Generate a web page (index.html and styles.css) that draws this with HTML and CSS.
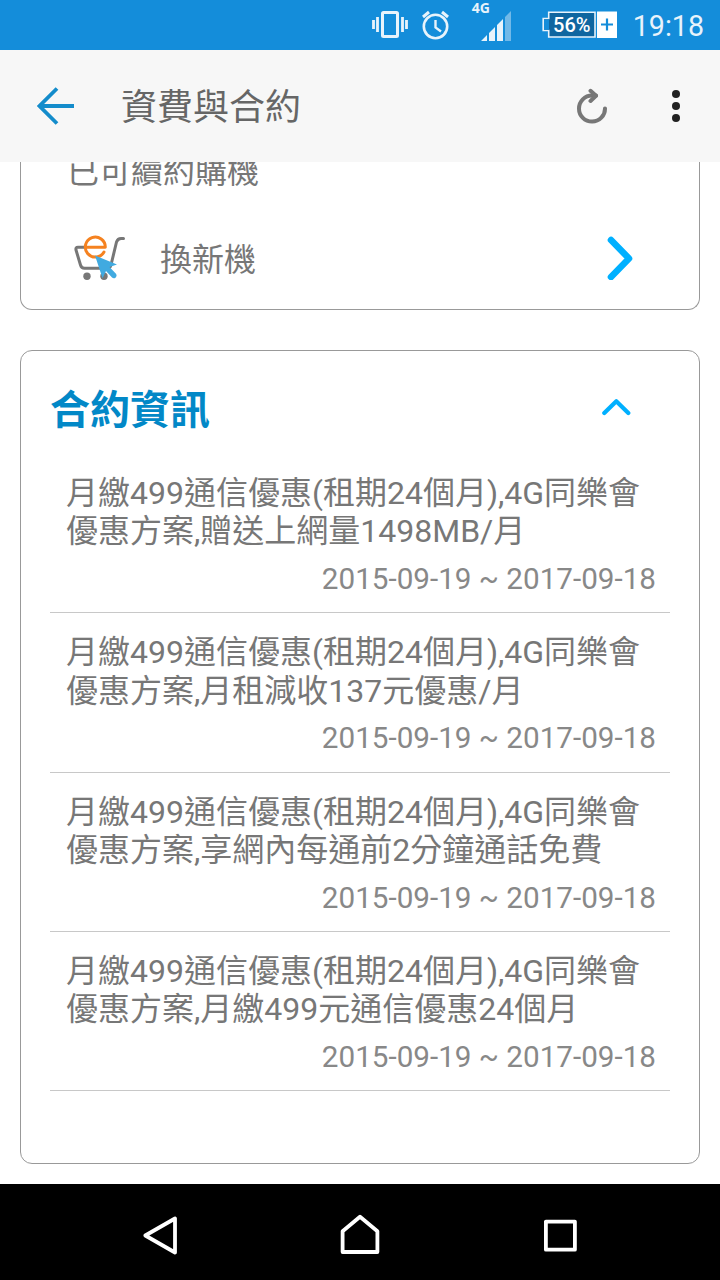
FILE: index.html
```html
<!DOCTYPE html>
<html lang="zh-Hant">
<head>
    <meta charset="UTF-8">
    <meta name="viewport" content="width=device-width, initial-scale=1.0">
    <title>資費與合約</title>
    <link rel="stylesheet" href="styles.css">
</head>
<body>
    <div class="status-bar">
        <svg class="vibrate" width="36" height="28" viewBox="0 0 36 28">
            <rect x="10.5" y="1.5" width="15" height="24" rx="1" fill="none" stroke="#e8f3fb" stroke-width="3"/>
            <path d="M1.5 9v9M5.5 6v15M30.5 6v15M34.5 9v9" stroke="#e8f3fb" stroke-width="2.8"/>
        </svg>
        <svg class="alarm" width="30" height="30" viewBox="0 0 30 30" fill="none" stroke="#e8f3fb">
            <circle cx="14.5" cy="16.5" r="11.7" stroke-width="2.6"/>
            <path d="M14.5 10v7.5l5.5 4" stroke-width="2.4"/>
            <path d="M2 7l6-5M27 7l-6-5" stroke-width="3"/>
        </svg>
        <div class="network">
            <span class="network-type">4G</span>
            <svg width="32" height="31" viewBox="0 0 32 31">
                <path d="M1 31L7 25V31zM9 31V23L15 17V31zM17 31V15L23 9V31z" fill="#e8f3fb"/>
                <path d="M25 31V7L31 1V31z" fill="#72b9e8"/>
            </svg>
        </div>
        <div class="battery">
            <svg width="75" height="28" viewBox="0 0 75 28">
                <path d="M6.7 1.2H53V26H6.7V19.5H1.2V7.5H6.7z" fill="#0f66a0" stroke="#e8f3fb" stroke-width="1.6"/>
                <path d="M2 8.4H7V18.7H2z" fill="#148dda"/>
                <path d="M55 .5H75V27H55z" fill="#fff"/>
                <path d="M59 13.5H71M65 7.5V19.5" stroke="#148dda" stroke-width="2.2"/>
            </svg>
            <span class="battery-level">56%</span>
        </div>
        <span class="clock">19:18</span>
    </div>

    <header class="toolbar">
        <svg class="back" width="38" height="38" viewBox="0 0 38 38" fill="none" stroke="#148ccb" stroke-width="3.8">
            <path d="M37 19H3M20 1.5L2.5 19L20 36.5"/>
        </svg>
        <h1>資費與合約</h1>
        <svg class="refresh" width="32" height="36" viewBox="0 0 32 36" fill="none" stroke="#777" stroke-width="4" stroke-linecap="round" stroke-linejoin="round">
            <path d="M28 20.4A13 13 0 1 1 15 7.6H19"/>
            <path d="M13.5 2.8L19 7.8L13.5 13"/>
        </svg>
        <svg class="more" width="8" height="32" viewBox="0 0 8 32" fill="#212121">
            <circle cx="4" cy="4" r="4"/>
            <circle cx="4" cy="16" r="4"/>
            <circle cx="4" cy="28" r="4"/>
        </svg>
    </header>

    <main>
        <section class="card renew">
            <p class="renew-status">已可續約購機</p>
            <div class="renew-row">
                <svg class="cart" width="52" height="46" viewBox="0 0 52 46" fill="none" stroke-linecap="round" stroke-linejoin="round">
                    <path d="M11 12.3H4Q1.4 12.3 2 15L6.5 30Q7.5 33.3 10.5 33.3H33Q36 33.3 37 30L42.5 7Q43.8 3.5 47 3.5H49.5" stroke="#777" stroke-width="3"/>
                    <circle cx="13" cy="41.3" r="3.7" fill="#777"/>
                    <circle cx="30" cy="41.3" r="3.7" fill="#777"/>
                    <path d="M11.5 12.3H31.3A10 10 0 1 0 30 17" stroke="#f58220" stroke-width="3"/>
                    <path d="M21 20.5L43 29.5L35.5 32L42.2 39Q43.4 41 41.5 42.8Q39.5 44 38 42.5L32 36L28.5 43.3z" fill="#41aae0"/>
                </svg>
                <span>換新機</span>
                <svg class="arrow" width="26" height="44" viewBox="0 0 26 44" fill="none" stroke="#00b0ff" stroke-width="6.6" stroke-linecap="round" stroke-linejoin="round">
                    <path d="M4 4L22 22.5L4 41"/>
                </svg>
            </div>
        </section>

        <section class="card contract">
            <div class="contract-header">
                <h2>合約資訊</h2>
                <svg width="30" height="18" viewBox="0 0 30 18" fill="none" stroke="#00b0ff" stroke-width="4.2" stroke-linecap="round" stroke-linejoin="round">
                    <path d="M3.3 15L15.3 3.2L27.3 15"/>
                </svg>
            </div>
            <ul>
                <li>
                    <p>月繳499通信優惠(租期24個月),4G同樂會<br>優惠方案,贈送上網量1498MB/月</p>
                    <time>2015-09-19 ~ 2017-09-18</time>
                </li>
                <li>
                    <p>月繳499通信優惠(租期24個月),4G同樂會<br>優惠方案,月租減收137元優惠/月</p>
                    <time>2015-09-19 ~ 2017-09-18</time>
                </li>
                <li>
                    <p>月繳499通信優惠(租期24個月),4G同樂會<br>優惠方案,享網內每通前2分鐘通話免費</p>
                    <time>2015-09-19 ~ 2017-09-18</time>
                </li>
                <li>
                    <p>月繳499通信優惠(租期24個月),4G同樂會<br>優惠方案,月繳499元通信優惠24個月</p>
                    <time>2015-09-19 ~ 2017-09-18</time>
                </li>
            </ul>
        </section>
    </main>

    <nav class="nav-bar">
        <svg width="40" height="44" viewBox="0 0 40 44">
            <path d="M5.3 22.5L35 5.5V39.5z"/>
        </svg>
        <svg width="40" height="44" viewBox="0 0 40 44">
            <path d="M2.6 18.3L20 3.8L37.4 18.3V39H2.6z"/>
        </svg>
        <svg width="40" height="44" viewBox="0 0 40 44">
            <path d="M5.9 8.6H34.9V36.7H5.9z"/>
        </svg>
    </nav>
</body>
</html>
```

FILE: styles.css
```css
* {
    box-sizing: border-box;
}

body {
    display: flex;
    flex-direction: column;
    width: 720px;
    height: 1280px;
    margin: 0;
    overflow: hidden;
    background-color: #fff;
    color: #777;
    font-family: Roboto, "Noto Sans CJK TC", sans-serif;
}

h1, h2, p, ul {
    margin: 0;
    padding: 0;
    font-weight: normal;
}

svg {
    display: block;
    flex: none;
}

/* Status bar */
.status-bar {
    display: flex;
    justify-content: flex-end;
    flex: none;
    height: 50px;
    padding-right: 16px;
    background-color: #148dda;
    color: #e8f3fb;
}

.vibrate {
    margin: 11px 13px 0 0;
}

.alarm {
    margin: 10px 21px 0 0;
}

.network {
    width: 40px;
    margin-right: 30px;
}

.network-type {
    display: block;
    height: 10px;
    font-family: "Noto Sans", sans-serif;
    font-size: 14px;
    font-weight: bold;
    line-height: 15px;
}

.network svg {
    margin-left: 8px;
}

.battery {
    position: relative;
    margin: 11px 16px 0 0;
}

.battery-level {
    position: absolute;
    top: 0;
    left: 7px;
    width: 46px;
    color: #fff;
    font-size: 20px;
    font-weight: 500;
    line-height: 28px;
    text-align: center;
}

.clock {
    font-size: 28.6px;
    line-height: 53px;
}

/* Toolbar */
.toolbar {
    display: flex;
    align-items: center;
    flex: none;
    height: 112px;
    padding: 0 40px 0 37px;
    background-color: #f7f7f7;
}

.toolbar h1 {
    margin-left: 46px;
    padding-top: 4px;
    color: #666;
    font-size: 36px;
    line-height: 48px;
}

.refresh {
    margin: 0 63px 0 auto;
}

/* Cards */
main {
    flex: 1;
    padding: 0 20px;
}

.card {
    border: 1.5px solid #999;
    border-radius: 12px;
}

.renew {
    height: 148px;
    margin-bottom: 40px;
    border-top: none;
    border-top-left-radius: 0;
    border-top-right-radius: 0;
    font-size: 32px;
    overflow: hidden;
}

.renew-status {
    height: 67px;
    margin-top: -9px;
    padding-left: 46px;
    line-height: 38px;
}

.renew-row {
    display: flex;
    align-items: center;
    height: 76px;
    padding: 0 66px 0 53px;
}

.renew-row span {
    margin-left: 34px;
    padding-bottom: 2px;
}

.arrow {
    margin-left: auto;
}

.contract {
    height: 814px;
    padding: 0 29px;
}

.contract-header {
    display: flex;
    align-items: center;
    justify-content: space-between;
    height: 103px;
    padding: 9px 39px 0 0;
}

.contract-header h2 {
    padding-bottom: 1px;
    color: #0288c7;
    font-size: 40px;
    font-weight: bold;
}

.contract ul {
    list-style: none;
}

.contract li {
    height: 159.35px;
    padding: 20px 14px 0 16px;
    border-bottom: 1.5px solid #c8c8c8;
}

.contract li p {
    font-size: 32px;
    line-height: 38.4px;
    white-space: nowrap;
}

.contract time {
    display: block;
    margin-top: 9px;
    color: #888;
    font-size: 29.65px;
    line-height: 38px;
    text-align: right;
}

/* Navigation bar */
.nav-bar {
    display: flex;
    align-items: center;
    justify-content: space-between;
    flex: none;
    height: 96px;
    padding: 6px 140px 0;
    background-color: #000;
}

.nav-bar path {
    fill: none;
    stroke: #fff;
    stroke-width: 3.8;
    stroke-linejoin: round;
}
```
